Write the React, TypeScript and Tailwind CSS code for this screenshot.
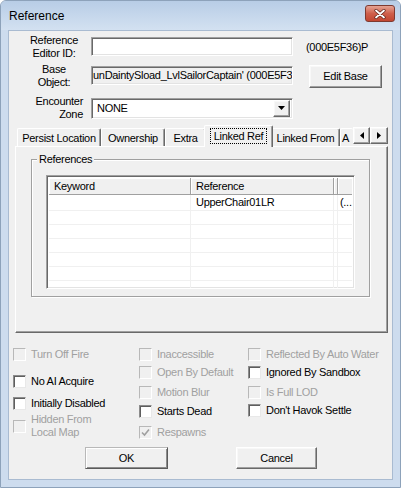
import React from 'react'

// sunken field edges (classic 3D look)
const sunken =
  'border border-t-[#a0a0a0] border-l-[#a0a0a0] border-b-white border-r-white shadow-[inset_1px_1px_0_#696969,inset_-1px_-1px_0_#e3e3e3]'
const raised =
  'border border-t-white border-l-white border-b-[#696969] border-r-[#696969] shadow-[inset_-1px_-1px_0_#a0a0a0,inset_1px_1px_0_#f8f8f8]'

function Check({
  label,
  checked = false,
  disabled = false,
  className = '',
}: {
  label: React.ReactNode
  checked?: boolean
  disabled?: boolean
  className?: string
}) {
  return (
    <div className={`flex items-center ${className}`}>
      <span
        className={`w-[13px] h-[13px] shrink-0 flex items-center justify-center border ${
          disabled
            ? 'border-t-[#b8b8b8] border-l-[#b8b8b8] border-b-white border-r-white bg-[#f0f0f0]'
            : 'border-t-[#8c8c8c] border-l-[#8c8c8c] border-b-[#e8e8e8] border-r-[#e8e8e8] bg-white shadow-[inset_1px_1px_0_#5e5e5e]'
        }`}
      >
        {checked && (
          <svg width="9" height="9" viewBox="0 0 9 9">
            <path d="M1 4.5 L3.5 7 L8 1.5" fill="none" stroke="#a0a0a0" strokeWidth="1.6" />
          </svg>
        )}
      </span>
      <span className={`ml-[5px] leading-[13px] ${disabled ? 'text-[#a0a0a0]' : 'text-black'}`}>
        {label}
      </span>
    </div>
  )
}

function Tab({ label, width, selected = false }: { label: string; width: string; selected?: boolean }) {
  if (selected) {
    return (
      <div
        className={`${width} h-[23px] -mx-[2px] -mb-px relative z-10 shrink-0 bg-[#f0f0f0] rounded-t-[2px] border-t border-l border-t-white border-l-white border-r border-r-[#696969] shadow-[inset_-1px_0_0_#a0a0a0] flex items-start justify-center pt-[2px]`}
      >
        <span className="border border-dotted border-black px-[3px] leading-[14px] whitespace-nowrap">{label}</span>
      </div>
    )
  }
  return (
    <div
      className={`${width} h-[19px] shrink-0 rounded-t-[2px] border-t border-l border-t-white border-l-white border-r border-r-[#696969] shadow-[inset_-1px_0_0_#a0a0a0] flex items-start justify-center pt-[2px] whitespace-nowrap leading-[14px]`}
    >
      {label}
    </div>
  )
}

export default function App() {
  return (
    <div className="w-[401px] h-[488px] flex flex-col bg-[#cddcee] border border-[#8da2ba] rounded-t-[6px] overflow-hidden font-['Liberation_Sans',Arial,sans-serif] text-[11px] tracking-[-0.3px] text-black">
      {/* Title bar */}
      <div className="h-[29px] shrink-0 flex items-start bg-gradient-to-b from-[#b8cde6] to-[#d3e1f1] pl-[8px] pr-[5px]">
        <span className="mt-[6px] text-[12px] tracking-normal text-black">Reference</span>
        <div className="ml-auto mt-[4px] w-[30px] h-[17px] rounded-[3px] border border-[#7e3a30] bg-gradient-to-b from-[#e4a394] via-[#cf5f4b] to-[#c24631] flex items-center justify-center">
          <svg width="12" height="10" viewBox="0 0 12 10">
            <path d="M2 1.5 L10 8.5 M10 1.5 L2 8.5" stroke="#5a2018" strokeWidth="3.2" strokeLinecap="round" />
            <path d="M2 1.5 L10 8.5 M10 1.5 L2 8.5" stroke="#ffffff" strokeWidth="1.8" strokeLinecap="round" />
          </svg>
        </div>
      </div>

      {/* Client area */}
      <div className="mx-[7px] mb-[7px] flex-1 flex flex-col bg-[#f0f0f0] border border-[#a9bbd1]">
        {/* Reference Editor ID */}
        <div className="flex items-center h-[27px] mt-[2px]">
          <div className="w-[62px] ml-[14px] text-center leading-[13px]">
            Reference
            <br />
            Editor ID:
          </div>
          <div className={`ml-[6px] w-[202px] h-[19px] bg-white ${sunken}`} />
          <span className="ml-[13px] mt-[1px]">(000E5F36)P</span>
        </div>

        {/* Base Object */}
        <div className="flex items-center h-[28px] mt-[2px]">
          <div className="w-[62px] ml-[14px] text-center leading-[13px]">
            Base
            <br />
            Object:
          </div>
          <div
            className={`ml-[6px] w-[202px] h-[19px] bg-[#f0f0f0] ${sunken} overflow-hidden whitespace-nowrap flex items-center pl-[1px] -mt-[2px]`}
          >
            unDaintySload_LvlSailorCaptain' (000E5F3
          </div>
          <button className={`ml-[16px] w-[73px] h-[23px] bg-[#f0f0f0] ${raised} flex items-center justify-center`}>
            Edit Base
          </button>
        </div>

        {/* Encounter Zone */}
        <div className="flex items-center h-[28px] mt-[4px]">
          <div className="w-[60px] ml-[14px] text-right leading-[13px]">
            Encounter
            <br />
            Zone
          </div>
          <div className={`ml-[8px] w-[202px] h-[21px] bg-white ${sunken} flex items-center pl-[5px] pr-[2px]`}>
            <span>NONE</span>
            <div className={`ml-auto w-[17px] h-[17px] bg-[#f0f0f0] ${raised} flex items-center justify-center`}>
              <svg width="7" height="4" viewBox="0 0 7 4">
                <path d="M0 0 H7 L3.5 4 Z" fill="#000" />
              </svg>
            </div>
          </div>
        </div>

        {/* Tabs */}
        <div className="mt-[2px] ml-[6px] w-[373px] flex flex-col">
          <div className="flex items-end h-[22px] pl-[2px]">
            <div className="flex items-end w-[336px] h-[23px] -mb-px overflow-hidden">
              <Tab label="Persist Location" width="w-[84px]" />
              <Tab label="Ownership" width="w-[64px]" />
              <Tab label="Extra" width="w-[41px]" />
              <Tab label="Linked Ref" width="w-[69px]" selected />
              <Tab label="Linked From" width="w-[69px]" />
              <div className="w-[13px] h-[19px] shrink-0 rounded-t-[2px] border-t border-l border-t-white border-l-white pl-[1px] pt-[2px] leading-[14px] self-end overflow-hidden">
                A
              </div>
            </div>
            <div className="flex mb-[2px]">
              <div className={`w-[17px] h-[17px] bg-[#f0f0f0] ${raised} flex items-center justify-center`}>
                <svg width="4" height="7" viewBox="0 0 4 7">
                  <path d="M4 0 V7 L0 3.5 Z" fill="#000" />
                </svg>
              </div>
              <div className={`w-[18px] h-[17px] bg-[#f0f0f0] ${raised} flex items-center justify-center`}>
                <svg width="4" height="7" viewBox="0 0 4 7">
                  <path d="M0 0 V7 L4 3.5 Z" fill="#000" />
                </svg>
              </div>
            </div>
          </div>

          {/* Tab panel */}
          <div className="h-[187px] border border-t-white border-l-white border-b-[#696969] border-r-[#696969] shadow-[inset_-1px_-1px_0_#a0a0a0] pl-[15px] pt-[12px]">
            {/* References group */}
            <div className="relative w-[339px] h-[138px] border border-[#a0a0a0] shadow-[1px_1px_0_#fff,inset_1px_1px_0_#fff] pl-[14px] pt-[15px]">
              <span className="absolute -top-[8px] left-[5px] px-[2px] bg-[#f0f0f0] leading-[14px]">References</span>

              <div className={`w-[309px] h-[114px] bg-white ${sunken} p-[2px] flex flex-col overflow-hidden`}>
                {/* header */}
                <div className="flex h-[17px] shrink-0 bg-[#f0f0f0] border-b border-b-[#a0a0a0]">
                  <div className="w-[142px] shrink-0 pl-[5px] flex items-center border-r border-r-[#a0a0a0] shadow-[inset_1px_1px_0_#fff]">
                    Keyword
                  </div>
                  <div className="w-[143px] shrink-0 pl-[5px] flex items-center border-r border-r-[#a0a0a0] shadow-[inset_1px_1px_0_#fff]">
                    Reference
                  </div>
                  <div className="w-[4px] shrink-0 border-r border-r-[#a0a0a0] shadow-[inset_1px_1px_0_#fff]" />
                  <div className="flex-1 shadow-[inset_1px_1px_0_#fff]" />
                </div>
                {/* rows */}
                {[0, 1, 2, 3, 4, 5, 6].map((i) => (
                  <div
                    key={i}
                    className={`flex shrink-0 border-b border-b-[#f0f0f0] ${i === 0 ? 'h-[16px]' : 'h-[14px]'}`}
                  >
                    <div className="w-[142px] shrink-0 border-r border-r-[#f0f0f0]" />
                    <div className="w-[143px] shrink-0 border-r border-r-[#f0f0f0] pl-[5px] flex items-center">
                      {i === 0 ? 'UpperChair01LR' : ''}
                    </div>
                    <div className="w-[4px] shrink-0 border-r border-r-[#f0f0f0]" />
                    <div className="flex-1 pl-[2px] flex items-center whitespace-nowrap">{i === 0 ? '(...' : ''}</div>
                  </div>
                ))}
              </div>
            </div>
          </div>
        </div>

        {/* Flags */}
        <div className="flex mt-[14px] pl-[4px]">
          <div className="w-[126px] flex flex-col">
            <Check label="Turn Off Fire" disabled className="h-[14px]" />
            <Check label="No AI Acquire" className="h-[14px] mt-[13px]" />
            <Check label="Initially Disabled" className="h-[14px] mt-[8px]" />
            <Check
              label={
                <>
                  Hidden From
                  <br />
                  Local Map
                </>
              }
              disabled
              className="h-[26px] mt-[3px]"
            />
          </div>
          <div className="w-[109px] flex flex-col">
            <Check label="Inaccessible" disabled className="h-[14px]" />
            <Check label="Open By Default" disabled className="h-[14px] mt-[4px]" />
            <Check label="Motion Blur" disabled className="h-[14px] mt-[6px]" />
            <Check label="Starts Dead" className="h-[14px] mt-[5px]" />
            <Check label="Respawns" checked disabled className="h-[14px] mt-[7px]" />
          </div>
          <div className="flex-1 flex flex-col">
            <Check label="Reflected By Auto Water" disabled className="h-[14px]" />
            <Check label="Ignored By Sandbox" className="h-[14px] mt-[4px]" />
            <Check label="Is Full LOD" disabled className="h-[14px] mt-[6px]" />
            <Check label="Don't Havok Settle" className="h-[14px] mt-[4px]" />
          </div>
        </div>

        {/* Buttons */}
        <div className="flex mt-[8px] pl-[76px]">
          <button className="w-[83px] h-[22px] bg-[#f0f0f0] border border-t-[#b8b8b8] border-l-[#b8b8b8] border-b-[#5a5a5a] border-r-[#5a5a5a] shadow-[inset_1px_1px_0_#fff,inset_-1px_-1px_0_#8c8c8c] flex items-center justify-center">
            OK
          </button>
          <button className={`ml-[68px] w-[81px] h-[22px] bg-[#f0f0f0] ${raised} flex items-center justify-center`}>
            Cancel
          </button>
        </div>
      </div>
    </div>
  )
}
